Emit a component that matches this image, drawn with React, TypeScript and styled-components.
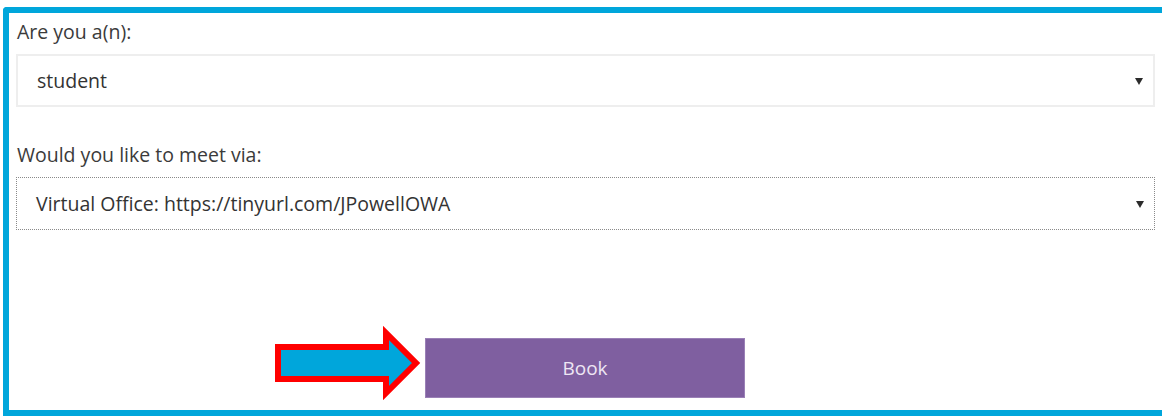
import React from "react";
import styled, { createGlobalStyle } from "styled-components";

const GlobalStyle = createGlobalStyle`
  html, body {
    margin: 0;
    padding: 0;
    background: #ffffff;
  }
  body {
    font-family: "Open Sans", "Noto Sans", Arial, sans-serif;
    width: 1162px;
    height: 416px;
    overflow: hidden;
  }
`;

const Page = styled.div`
  padding: 7px 0 0 3px;
`;

const Frame = styled.div`
  width: 1180px;
  height: 397px;
  border-top: 6px solid #00a6db;
  border-left: 6px solid #00a6db;
  border-bottom: 6px solid #00a6db;
  border-top-left-radius: 4px;
  display: flex;
  flex-direction: column;
  padding: 0 0 0 7px;
  box-sizing: content-box;
`;

const Field = styled.div`
  width: 1139px;
  display: flex;
  flex-direction: column;
`;

const Label = styled.label`
  font-size: 19.5px;
  line-height: 26px;
  color: #3b3b3b;
  padding: 6px 0 0 1px;
  height: 41px;
  box-sizing: border-box;
`;

const SelectBox = styled.div<{ $focused?: boolean }>`
  height: 53px;
  box-sizing: border-box;
  display: flex;
  align-items: center;
  justify-content: space-between;
  padding: 0 10px 0 19px;
  border: ${(p) => (p.$focused ? "1px dotted #8a8a8a" : "2px solid #eeeeee")};
  font-size: 19.5px;
  color: #333333;
`;

const Caret = styled.svg`
  width: 8px;
  height: 8px;
  fill: #2b2b2b;
`;

const Gap = styled.div<{ $h: number }>`
  height: ${(p) => p.$h}px;
`;

const Actions = styled.div`
  margin-top: auto;
  display: flex;
  align-items: center;
  padding: 0 0 12px 256px;
`;

/* the callout arrow overhangs the button row above and below */
const Pointer = styled.svg`
  width: 152px;
  height: 84px;
  margin: -17px 1px -7px 0;
  overflow: visible;
`;

const BookButton = styled.button`
  width: 320px;
  height: 60px;
  background: #7f5fa0;
  border: 1px solid #9a80b6;
  color: #eee6f4;
  font-family: "Open Sans", "Noto Sans", Arial, sans-serif;
  font-size: 19px;
  cursor: pointer;
`;

const DownCaret = () => (
  <Caret viewBox="0 0 8 8">
    <polygon points="0,1 8,1 4,8" />
  </Caret>
);

export default function App() {
  return (
    <>
      <GlobalStyle />
      <Page>
        <Frame>
          <Field>
            <Label>Are you a(n):</Label>
            <SelectBox>
              <span>student</span>
              <DownCaret />
            </SelectBox>
          </Field>
          <Gap $h={29} />
          <Field>
            <Label>Would you like to meet via:</Label>
            <SelectBox $focused>
              <span>Virtual Office: https://tinyurl.com/JPowellOWA</span>
              <DownCaret />
            </SelectBox>
          </Field>
          <Actions>
            <Pointer viewBox="0 0 152 84">
              <polygon
                points="6,26 114,26 114,12 144,42 114,72 114,58 6,58"
                fill="#00a6db"
                stroke="#ff0000"
                strokeWidth="6"
                strokeLinejoin="miter"
                strokeMiterlimit="10"
              />
            </Pointer>
            <BookButton>Book</BookButton>
          </Actions>
        </Frame>
      </Page>
    </>
  );
}
